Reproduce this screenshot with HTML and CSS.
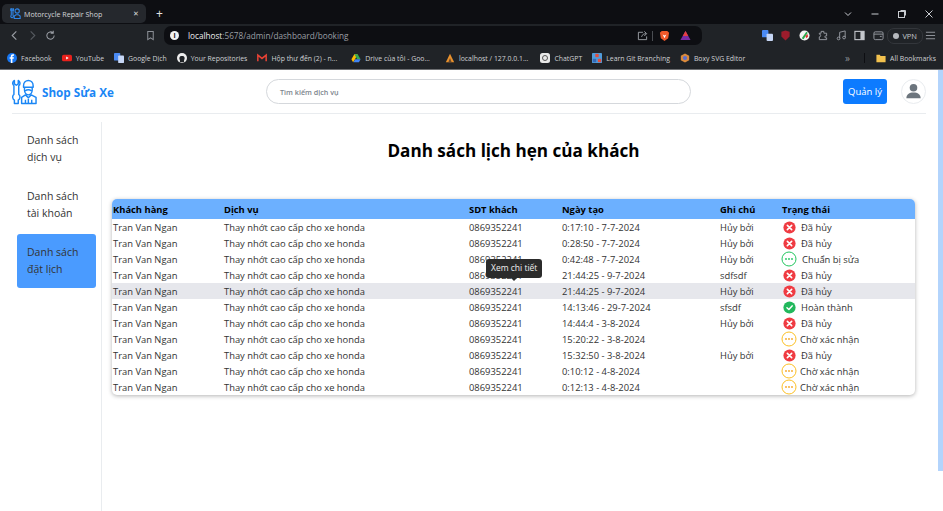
FILE: index.html
```html
<!DOCTYPE html>
<html lang="vi">
<head>
    <meta charset="UTF-8">
    <meta name="viewport" content="width=device-width, initial-scale=1.0">
    <title>Motorcycle Repair Shop</title>
    <link rel="stylesheet" href="styles.css">
</head>
<body>
    <div class="tabstrip">
        <div class="tab">
            <svg class="tab-icon" viewBox="0 0 26 26">
                <g fill="none" stroke="#2f86e8" stroke-width="2.600">
                    <path d="M3 1v4h4V1c2 2 2 5 0 6v10c2 2 1 6-2 6s-4-4-2-6V7C1 6 1 3 3 1z"/>
                    <circle cx="17" cy="7" r="5"/>
                    <path d="M10 25v-6l4-3h6l4 3v6z"/>
                </g>
            </svg>
            <span class="tab-title">Motorcycle Repair Shop</span>
            <span class="tab-close">✕</span>
        </div>
        <span class="tab-new">+</span>
        <div class="window-btns">
            <svg viewBox="0 0 10 10"><path d="M2 3.500l3 3 3-3" fill="none" stroke="#c9ccd1" stroke-width="1"/></svg>
            <svg viewBox="0 0 10 10"><path d="M1.500 5h7" stroke="#c9ccd1" stroke-width="1"/></svg>
            <svg viewBox="0 0 10 10"><rect x="1.500" y="2.500" width="6" height="6" fill="none" stroke="#c9ccd1"/><path d="M3.500 1.500h5v5" fill="none" stroke="#c9ccd1"/></svg>
            <svg viewBox="0 0 10 10"><path d="M1.500 1.500l7 7M8.500 1.500l-7 7" stroke="#c9ccd1"/></svg>
        </div>
    </div>

    <div class="toolbar">
        <div class="nav-btns">
            <svg viewBox="0 0 12 12"><path d="M8 1.500L3.500 6 8 10.500" fill="none" stroke="#9a9ea5" stroke-width="1.200"/></svg>
            <svg viewBox="0 0 12 12"><path d="M4 1.500L8.500 6 4 10.500" fill="none" stroke="#565a60" stroke-width="1.200"/></svg>
            <svg viewBox="0 0 12 12"><path d="M10 6a4 4 0 1 1-1.200-2.800M9 .8v2.800H6.200" fill="none" stroke="#9a9ea5" stroke-width="1.100"/></svg>
        </div>
        <svg class="bookmark-btn" viewBox="0 0 12 12"><path d="M3 1.500h6v9L6 8.500l-3 2z" fill="none" stroke="#8d9198" stroke-width="1.100"/></svg>
        <div class="urlbar">
            <span class="info-dot">i</span>
            <span class="url"><b>localhost</b>:5678/admin/dashboard/booking</span>
            <svg class="url-icon" viewBox="0 0 12 12"><path d="M6.500 2.500H1.500v8h9V7M5 7.500c.5-2.500 2.500-3.500 5-3.500M8 1.500l2.500 2.500L8 6.500" fill="none" stroke="#a0a4aa"/></svg>
            <span class="url-sep"></span>
            <svg class="url-icon brave" viewBox="0 0 12 12"><path d="M3 1h6l2 2-1 6-4 3-4-3-1-6z" fill="#f1592a"/><path d="M4 5l2 1 2-1-2 4z" fill="#fff"/></svg>
            <svg class="url-icon" viewBox="0 0 12 12"><path d="M6 1l5.500 10H.5z" fill="#7a2ca5"/><path d="M6 1l3 5.500H3z" fill="#e5403f"/></svg>
        </div>
        <div class="ext-btns">
            <svg viewBox="0 0 12 12"><rect x="0" y="0" width="7" height="8" rx="1" fill="#4a8af4"/><rect x="5" y="4" width="7" height="8" rx="1" fill="#c6d6f5"/></svg>
            <svg viewBox="0 0 12 12"><path d="M1.500 2L6 .5 10.500 2v5L6 11.500 1.500 7z" fill="#9c1c2c"/></svg>
            <svg viewBox="0 0 12 12"><circle cx="6" cy="6" r="5.500" fill="#f3f3f3"/><path d="M3 9l5-7 1.500 1L5 10z" fill="#2aa84a"/><path d="M7 7l2-3 1 3-2 2z" fill="#d33"/></svg>
            <svg viewBox="0 0 12 12"><path d="M4.500 1.500h3v2h3v3h-1.500a1.500 1.500 0 0 0 0 2h1.500v2h-8v-3a1.500 1.500 0 0 0 0-3v-1h2z" fill="none" stroke="#9a9ea5"/></svg>
            <svg viewBox="0 0 12 12"><path d="M4 9V2.500l6-1.500V8" fill="none" stroke="#9a9ea5"/><circle cx="2.800" cy="9.200" r="1.500" fill="none" stroke="#9a9ea5"/><circle cx="8.800" cy="8.200" r="1.500" fill="none" stroke="#9a9ea5"/></svg>
            <svg viewBox="0 0 12 12"><rect x="1" y="1.500" width="10" height="9" fill="none" stroke="#c4c7cc" stroke-width="1.200"/><rect x="7" y="1.500" width="4" height="9" fill="#c4c7cc"/></svg>
            <svg viewBox="0 0 12 12"><rect x="1" y="2" width="10" height="8.500" rx="1.500" fill="none" stroke="#9a9ea5"/><path d="M1 4.500h10M7.500 7h2" stroke="#9a9ea5"/></svg>
        </div>
        <span class="vpn"><i></i>VPN</span>
        <svg class="menu-btn" viewBox="0 0 12 12"><path d="M1 2.500h10M1 6h10M1 9.500h10" stroke="#8d9198" stroke-width="1.200"/></svg>
    </div>

    <div class="bookmarks">
        <span class="bm"><svg viewBox="0 0 12 12"><circle cx="6" cy="6" r="6" fill="#1877f2"/><path d="M6.500 12V7H8l.3-1.800H6.500V4.200c0-.6.300-1 1-1h.9V1.600C8 1.500 7.500 1.500 7 1.500c-1.500 0-2.400.9-2.400 2.500v1.200H3.200V7h1.400v5z" fill="#fff"/></svg>Facebook</span>
        <span class="bm"><svg viewBox="0 0 12 12"><rect y="2" width="12" height="8" rx="2" fill="#e8211c"/><path d="M5 4.300L8 6 5 7.700z" fill="#fff"/></svg>YouTube</span>
        <span class="bm"><svg viewBox="0 0 12 12"><rect width="7.500" height="9" rx="1" fill="#4a8af4"/><rect x="5" y="3" width="7" height="9" rx="1" fill="#c6d6f5"/></svg>Google Dịch</span>
        <span class="bm"><svg viewBox="0 0 12 12"><circle cx="6" cy="6" r="6" fill="#eee"/><path d="M3.500 11V8.500C2.500 7.500 2.500 5 4 4c1-.5 3-.5 4 0 1.500 1 1.500 3.500.5 4.500V11z" fill="#202327"/></svg>Your Repositories</span>
        <span class="bm"><svg viewBox="0 0 12 12"><path d="M1 10V2.500l5 4 5-4V10" fill="none" stroke="#ea4335" stroke-width="1.800"/></svg>Hộp thư đến (2) - n...</span>
        <span class="bm bm-drive"><svg viewBox="0 0 12 12"><path d="M4 1.500h4L4.500 8 2.500 11 .5 7.500z" fill="#fbbc04"/><path d="M8 1.500l3.500 6h-4L4 1.500z" fill="#34a853"/><path d="M3 11l2-3.500h6.500L9.500 11z" fill="#4285f4"/></svg>Drive của tôi - Goo...</span>
        <span class="bm bm-local"><svg viewBox="0 0 12 12"><path d="M1 11L6 1l5 10z" fill="#e8912d"/><path d="M4 11l2-5 2 5z" fill="#6b4a2c"/></svg>localhost / 127.0.0.1...</span>
        <span class="bm bm-gpt"><svg viewBox="0 0 12 12"><rect width="12" height="12" rx="3" fill="#e8e8e8"/><circle cx="6" cy="6" r="3" fill="none" stroke="#555" stroke-width="1.200"/></svg>ChatGPT</span>
        <span class="bm"><svg viewBox="0 0 12 12"><rect width="12" height="12" rx="1" fill="#4f9bd9"/><rect x="4" y="1" width="4" height="4" fill="#e24d3d"/><rect x="1" y="7" width="4" height="4" fill="#3468b8"/><rect x="7" y="7" width="4" height="4" fill="#e24d3d"/></svg>Learn Git Branching</span>
        <span class="bm"><svg viewBox="0 0 12 12"><path d="M6 .5l5 2.800v5.400l-5 2.800-5-2.800V3.300z" fill="#d98a3d"/><circle cx="6" cy="6" r="2.500" fill="#5b6fd0"/></svg>Boxy SVG Editor</span>
        <span class="bm-more">»</span>
        <span class="bm-sep"></span>
        <span class="bm"><svg viewBox="0 0 12 12"><path d="M.5 2h4l1 1.500h6V11H.5z" fill="#f2c14e"/></svg>All Bookmarks</span>
    </div>

    <div class="viewport">
        <div class="page">
            <header class="topbar">
                <div class="brand">
                    <svg class="brand-logo" viewBox="0 0 26 26">
                        <g fill="none" stroke="#1a86f5" stroke-width="1.500" stroke-linejoin="round">
                            <path d="M2.500 1v3.500L4.500 6l2-1.500V1C8.500 2 9 5 7 6.500V15.500C9 17 8.500 20.500 6.500 21.500V25h-4v-3.500C.5 20.500 0 17 2 15.500V6.500C0 5 .5 2 2.500 1z"/>
                            <path d="M12 8V6.500C12 3 14.500 1 17 1s5 2 5 5.500V8z"/>
                            <path d="M13 8v3c0 3 2 5 4 5s4-2 4-5V8"/>
                            <path d="M13.500 12c2-1.500 5-1.500 7 0"/>
                            <path d="M10 25v-6.500l4-2.500 3 3 3-3 5 2.500V25z"/>
                            <path d="M14 25v-4M17 25v-5M20.500 25v-4"/>
                        </g>
                    </svg>
                    <span class="brand-name">Shop Sửa Xe</span>
                </div>
                <div class="search">Tìm kiếm dịch vụ</div>
                <div class="topbar-actions">
                    <button class="manage-btn">Quản lý</button>
                    <div class="avatar">
                        <svg viewBox="0 0 20 20"><circle cx="10" cy="6" r="4" fill="#6c757d"/><path d="M2.500 17c0-4 3-6 7.500-6s7.500 2 7.500 6z" fill="#6c757d"/></svg>
                    </div>
                </div>
            </header>

            <div class="content">
                <nav class="sidebar">
                    <a class="side-item">Danh sách dịch vụ</a>
                    <a class="side-item">Danh sách tài khoản</a>
                    <a class="side-item active">Danh sách đặt lịch</a>
                </nav>
                <main class="main">
                    <h1>Danh sách lịch hẹn của khách</h1>
                    <div class="table-card">
                        <table>
                            <colgroup>
                                <col class="c-name"><col class="c-service"><col class="c-phone"><col class="c-date"><col class="c-note"><col>
                            </colgroup>
                            <thead>
                                <tr><th>Khách hàng</th><th>Dịch vụ</th><th>SDT khách</th><th>Ngày tạo</th><th>Ghi chú</th><th>Trạng thái</th></tr>
                            </thead>
                            <tbody>
                                <tr><td>Tran Van Ngan</td><td>Thay nhớt cao cấp cho xe honda</td><td>0869352241</td><td>0:17:10 - 7-7-2024</td><td>Hủy bởi</td><td><span class="status"><svg class="st-icon"><use href="#st-cancel"/></svg>Đã hủy</span></td></tr>
                                <tr><td>Tran Van Ngan</td><td>Thay nhớt cao cấp cho xe honda</td><td>0869352241</td><td>0:28:50 - 7-7-2024</td><td>Hủy bởi</td><td><span class="status"><svg class="st-icon"><use href="#st-cancel"/></svg>Đã hủy</span></td></tr>
                                <tr><td>Tran Van Ngan</td><td>Thay nhớt cao cấp cho xe honda</td><td>0869352241</td><td>0:42:48 - 7-7-2024</td><td>Hủy bởi</td><td><span class="status wide"><svg class="st-icon big"><use href="#st-prep"/></svg>Chuẩn bị sửa</span></td></tr>
                                <tr><td>Tran Van Ngan</td><td>Thay nhớt cao cấp cho xe honda</td><td>0869352241</td><td>21:44:25 - 9-7-2024</td><td>sdfsdf</td><td><span class="status"><svg class="st-icon"><use href="#st-cancel"/></svg>Đã hủy</span></td></tr>
                                <tr class="hovered"><td>Tran Van Ngan</td><td>Thay nhớt cao cấp cho xe honda</td><td><span class="tip-anchor">0869352241<span class="tooltip">Xem chi tiết</span></span></td><td>21:44:25 - 9-7-2024</td><td>Hủy bởi</td><td><span class="status"><svg class="st-icon"><use href="#st-cancel"/></svg>Đã hủy</span></td></tr>
                                <tr><td>Tran Van Ngan</td><td>Thay nhớt cao cấp cho xe honda</td><td>0869352241</td><td>14:13:46 - 29-7-2024</td><td>sfsdf</td><td><span class="status"><svg class="st-icon"><use href="#st-done"/></svg>Hoàn thành</span></td></tr>
                                <tr><td>Tran Van Ngan</td><td>Thay nhớt cao cấp cho xe honda</td><td>0869352241</td><td>14:44:4 - 3-8-2024</td><td>Hủy bởi</td><td><span class="status"><svg class="st-icon"><use href="#st-cancel"/></svg>Đã hủy</span></td></tr>
                                <tr><td>Tran Van Ngan</td><td>Thay nhớt cao cấp cho xe honda</td><td>0869352241</td><td>15:20:22 - 3-8-2024</td><td></td><td><span class="status tight"><svg class="st-icon big"><use href="#st-wait"/></svg>Chờ xác nhận</span></td></tr>
                                <tr><td>Tran Van Ngan</td><td>Thay nhớt cao cấp cho xe honda</td><td>0869352241</td><td>15:32:50 - 3-8-2024</td><td>Hủy bởi</td><td><span class="status"><svg class="st-icon"><use href="#st-cancel"/></svg>Đã hủy</span></td></tr>
                                <tr><td>Tran Van Ngan</td><td>Thay nhớt cao cấp cho xe honda</td><td>0869352241</td><td>0:10:12 - 4-8-2024</td><td></td><td><span class="status tight"><svg class="st-icon big"><use href="#st-wait"/></svg>Chờ xác nhận</span></td></tr>
                                <tr><td>Tran Van Ngan</td><td>Thay nhớt cao cấp cho xe honda</td><td>0869352241</td><td>0:12:13 - 4-8-2024</td><td></td><td><span class="status tight"><svg class="st-icon big"><use href="#st-wait"/></svg>Chờ xác nhận</span></td></tr>
                            </tbody>
                        </table>
                    </div>
                </main>
            </div>
        </div>
        <div class="scrollbar"></div>
    </div>

    <svg class="defs" width="0" height="0">
        <symbol id="st-cancel" viewBox="0 0 16 16"><circle cx="8" cy="8" r="6.500" fill="#ef3b42"/><path d="M5.700 5.700l4.600 4.600M10.300 5.700l-4.600 4.600" stroke="#fff" stroke-width="1.700" stroke-linecap="round"/></symbol>
        <symbol id="st-done" viewBox="0 0 16 16"><circle cx="8" cy="8" r="6.500" fill="#22b85c"/><path d="M5.300 8.200l2 1.900 3.500-3.800" fill="none" stroke="#fff" stroke-width="1.600" stroke-linecap="round" stroke-linejoin="round"/></symbol>
        <symbol id="st-prep" viewBox="0 0 16 16"><circle cx="8" cy="8" r="7" fill="none" stroke="#22c55e"/><circle cx="5" cy="8" r=".9" fill="#22c55e"/><circle cx="8" cy="8" r=".9" fill="#22c55e"/><circle cx="11" cy="8" r=".9" fill="#22c55e"/></symbol>
        <symbol id="st-wait" viewBox="0 0 16 16"><circle cx="8" cy="8" r="7" fill="none" stroke="#fbbf24"/><circle cx="5" cy="8" r=".9" fill="#f5a623"/><circle cx="8" cy="8" r=".9" fill="#f5a623"/><circle cx="11" cy="8" r=".9" fill="#f5a623"/></symbol>
    </svg>
</body>
</html>
```

FILE: styles.css
```css
* {
    box-sizing: border-box;
}
html, body {
    height: 100%;
}
body {
    margin: 0;
    width: 943px;
    height: 511px;
    overflow: hidden;
    display: flex;
    flex-direction: column;
    font-family: "Open Sans", "Noto Sans", sans-serif;
    background-color: #fff;
    color: #212529;
}

/* browser frame */
.tabstrip {
    height: 24px;
    flex: none;
    display: flex;
    align-items: center;
    padding: 3px 9px 0 2px;
    background-color: #0d0e12;
    color: #d5d7da;
    font-size: 8px;
}
.tab {
    width: 144px;
    height: 19px;
    display: flex;
    align-items: center;
    padding: 0 7px 0 8px;
    background-color: #25282d;
    border-radius: 5px;
}
.tab-icon {
    width: 11px;
    height: 11px;
    margin-right: 3px;
}
.tab-title {
    flex: 1;
    font-size: 7.100px;
    white-space: nowrap;
}
.tab-close {
    font-size: 7px;
}
.tab-new {
    margin-left: 10px;
    font-size: 12px;
    line-height: 1;
    color: #e3e4e6;
}
.window-btns {
    margin-left: auto;
    display: flex;
    gap: 17px;
}
.window-btns svg {
    width: 10px;
    height: 10px;
}
.toolbar {
    height: 23px;
    flex: none;
    display: flex;
    align-items: center;
    padding: 0 7px 0 9px;
    background-color: #202327;
}
.nav-btns {
    display: flex;
    gap: 7px;
}
.nav-btns svg {
    width: 11px;
    height: 11px;
}
.bookmark-btn {
    width: 11px;
    height: 11px;
    margin-left: 89px;
}
.urlbar {
    width: 539px;
    height: 19px;
    margin-left: 8px;
    display: flex;
    align-items: center;
    padding: 0 11px 0 6px;
    background-color: #0d0e12;
    border-radius: 7px;
    font-size: 8.200px;
    color: #9b9fa5;
}
.info-dot {
    width: 9px;
    height: 9px;
    margin-right: 9px;
    border-radius: 50%;
    background-color: #f2f2f2;
    color: #111;
    font-size: 7px;
    font-weight: 700;
    line-height: 9px;
    text-align: center;
}
.url {
    flex: 1;
    white-space: nowrap;
}
.url b {
    font-weight: 400;
    color: #eceded;
}
.url-icon {
    width: 11px;
    height: 11px;
}
.url-sep {
    width: 1px;
    height: 10px;
    margin: 0 6px 0 4px;
    background-color: #4a4d52;
}
.brave {
    margin-right: 10px;
}
.ext-btns {
    margin-left: 60px;
    display: flex;
    gap: 7.500px;
}
.ext-btns svg {
    width: 11px;
    height: 11px;
}
.vpn {
    margin-left: 3.500px;
    height: 16px;
    display: flex;
    align-items: center;
    gap: 3px;
    padding: 0 5px;
    border: 1px solid #33363b;
    border-radius: 7px;
    font-size: 7.500px;
    color: #c4c7cc;
}
.vpn i {
    width: 6px;
    height: 6px;
    border-radius: 50%;
    background-color: #b5b8bd;
}
.menu-btn {
    width: 11px;
    height: 11px;
    margin-left: 2px;
}
.bookmarks {
    height: 23px;
    flex: none;
    display: flex;
    align-items: center;
    gap: 10px;
    padding: 0 7px 0 7px;
    background-color: #202327;
    border-bottom: 1px solid #6d6f72;
    color: #cfd1d4;
    font-size: 6.900px;
    white-space: nowrap;
}
.bm {
    display: flex;
    align-items: center;
    gap: 4px;
}
.bm svg {
    width: 10px;
    height: 10px;
}
.bm-drive {
    margin-left: 4px;
}
.bm-local {
    margin-left: 5px;
}
.bm-gpt {
    margin-left: 2px;
}
.bm-more {
    margin-left: auto;
    font-size: 10px;
    color: #8d9198;
}
.bm-sep {
    width: 1px;
    height: 10px;
    margin: 0 1px 0 4px;
    background-color: #0d0e12;
}

/* page */
.viewport {
    flex: 1;
    min-height: 0;
    display: flex;
}
.page {
    flex: 1;
    min-width: 0;
    padding: 0 12px;
}
.scrollbar {
    width: 5px;
    height: 401px;
    background-color: #b3d4fc;
}
.topbar {
    height: 44px;
    display: flex;
    align-items: center;
    border-bottom: 1px solid #e9ecef;
}
.brand {
    width: 254px;
    display: flex;
    align-items: center;
    gap: 5px;
}
.brand-logo {
    width: 25px;
    height: 26px;
}
.brand-name {
    font-size: 11.700px;
    font-weight: 700;
    color: #1a86f5;
}
.search {
    width: 425px;
    height: 25px;
    padding-left: 13px;
    border: 1px solid #d5d8dc;
    border-radius: 13px;
    font-size: 7.200px;
    font-weight: 600;
    line-height: 25px;
    color: #7d858d;
}
.topbar-actions {
    margin-left: auto;
    display: flex;
    align-items: center;
    gap: 14px;
}
.manage-btn {
    width: 44px;
    height: 25px;
    padding: 0;
    border: none;
    border-radius: 3px;
    background-color: #0d7bff;
    color: #fff;
    font-family: inherit;
    font-size: 9.500px;
}
.avatar {
    width: 25px;
    height: 25px;
    display: flex;
    align-items: center;
    justify-content: center;
    border: 1px solid #e9ecef;
    border-radius: 50%;
}
.avatar svg {
    width: 19px;
    height: 19px;
}
.content {
    display: flex;
    margin-top: 8px;
}
.sidebar {
    width: 90px;
    height: 389px;
    flex: none;
    display: flex;
    flex-direction: column;
    gap: 2px;
    padding: 0 5px;
    border-right: 1px solid #e9ecef;
}
.side-item {
    height: 54px;
    padding: 10px 10px;
    border-radius: 3px;
    font-size: 10.500px;
    line-height: 17px;
    color: #333;
}
.side-item.active {
    background-color: #4a9bff;
}
.main {
    flex: 1;
    min-width: 0;
    padding: 0 11px 0 10px;
}
h1 {
    margin: 17px 0 36px;
    font-size: 17.100px;
    line-height: 24px;
    font-weight: 700;
    text-align: center;
    color: #000;
}
.table-card {
    border-radius: 5px;
    box-shadow: 0 1px 4px rgba(0,0,0,0.3);
    overflow: hidden;
}
table {
    width: 100%;
    table-layout: fixed;
    border-collapse: collapse;
    font-size: 9.400px;
}
.c-name { width: 111px; }
.c-service { width: 245px; }
.c-phone { width: 93px; }
.c-date { width: 158px; }
.c-note { width: 62px; }
th {
    height: 20px;
    padding: 0 0 0 1px;
    background-color: #6cb0ff;
    color: #000;
    font-weight: 700;
    text-align: left;
}
td {
    height: 16px;
    padding: 0 0 0 1px;
    color: #333;
    white-space: nowrap;
}
tr.hovered td {
    background-color: #e6e7ec;
}
.status {
    display: flex;
    align-items: center;
    gap: 4px;
}
.status.tight {
    gap: 3px;
    margin-left: -1px;
}
.status.wide {
    gap: 5px;
    margin-left: -1px;
}
.st-icon {
    width: 15px;
    height: 15px;
}
.st-icon.big {
    width: 16px;
    height: 16px;
}
.defs {
    position: absolute;
}

/* tooltip shown over the hovered phone cell */
.tip-anchor {
    position: relative;
    display: inline-block;
}
.tooltip {
    position: absolute;
    left: 17px;
    bottom: 20px;
    padding: 2.500px 5px;
    border-radius: 3px;
    background-color: #2b2b2b;
    color: #f0f0f0;
    font-size: 8.500px;
    line-height: 14px;
    white-space: nowrap;
}
.tooltip::after {
    content: "";
    position: absolute;
    left: 50%;
    bottom: -3px;
    margin-left: -3px;
    border-left: 3px solid transparent;
    border-right: 3px solid transparent;
    border-top: 3px solid #2b2b2b;
}
```
